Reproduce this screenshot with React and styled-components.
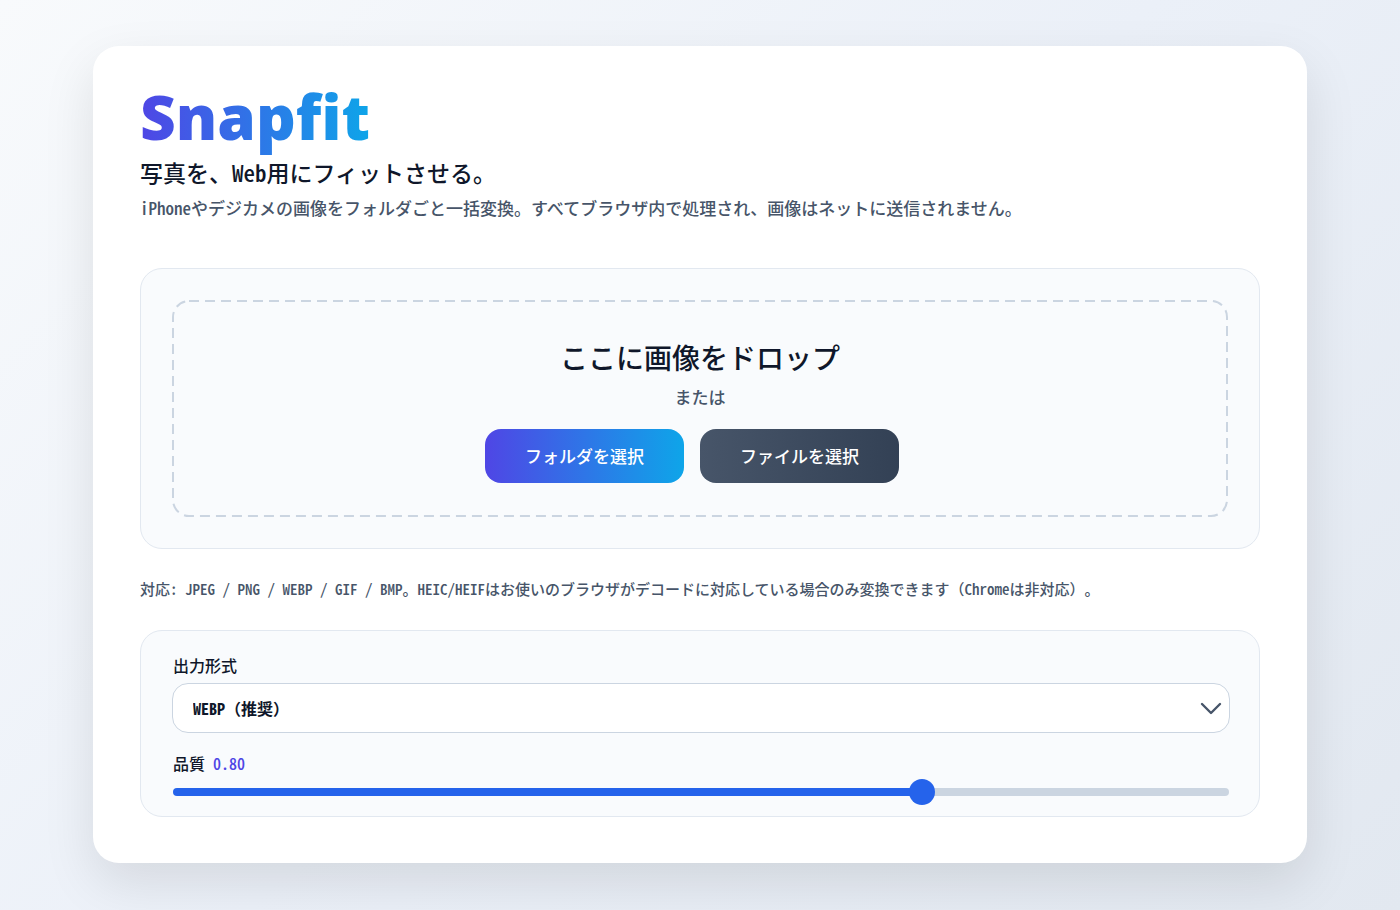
import React, { useState } from "react";
import styled, { createGlobalStyle } from "styled-components";

const GlobalStyle = createGlobalStyle`
  *,
  *::before,
  *::after {
    box-sizing: border-box;
  }

  body {
    margin: 0;
    font-family: "Noto Sans CJK JP", sans-serif;
    font-feature-settings: "hwid";
    text-spacing-trim: space-all;
    color: #0f172a;
  }
`;

const Page = styled.div`
  min-height: 100vh;
  padding: 46px 24px;
  background: linear-gradient(135deg, #f8fafc 0%, #ebf0f8 50%, #e2e8f0 100%);
`;

const Card = styled.main`
  display: flex;
  flex-direction: column;
  max-width: 1214px;
  margin: 0 auto;
  padding: 30px 47px 46px;
  border-radius: 26px;
  background: #ffffff;
  box-shadow: 0 20px 52px rgba(0, 0, 0, 0.1);
`;

const Header = styled.header`
  display: flex;
  flex-direction: column;
  align-items: flex-start;
  margin-bottom: 38px;
`;

const Logo = styled.h1`
  margin: 0;
  font-family: "Noto Sans", sans-serif;
  font-size: 62px;
  font-weight: 900;
  line-height: 80px;
  background: linear-gradient(90deg, #4f46e5, #0ea5e9);
  background-clip: text;
  color: transparent;
`;

const Tagline = styled.p`
  margin: 0;
  font-size: 23px;
  font-weight: 500;
  line-height: 32px;
`;

const Description = styled.p`
  margin: 0;
  font-size: 17px;
  font-weight: 500;
  line-height: 40px;
  padding-bottom: 2px;
  color: #475569;
`;

const Panel = styled.section`
  padding: ${(props) => (props.$compact ? "18px 29px 11px 31px" : "31px")};
  border: 1px solid #e2e8f0;
  border-radius: 22px;
  background: #f9fbfd;
`;

const DropZone = styled.div`
  position: relative;
  display: flex;
  flex-direction: column;
  align-items: center;
  padding: 35px 24px 34px;
`;

const DashedFrame = styled.svg`
  position: absolute;
  inset: 0;
  width: 100%;
  height: 100%;
  pointer-events: none;

  rect {
    width: calc(100% - 2px);
    height: calc(100% - 2px);
    fill: none;
    stroke: #cbd5e1;
    stroke-width: 2px;
    stroke-dasharray: 10 6;
  }
`;

const DropTitle = styled.h2`
  margin: 0;
  font-size: 28px;
  font-weight: 500;
  line-height: 44px;
`;

const DropText = styled.p`
  margin: 0 0 14px;
  font-size: 17px;
  font-weight: 500;
  line-height: 36px;
  color: #475569;
`;

const Actions = styled.div`
  display: flex;
  flex-wrap: wrap;
  justify-content: center;
`;

const Button = styled.button`
  margin: 0 16px 0 0;
  padding: 0 40px;
  border: none;
  border-radius: 16px;
  font: inherit;
  font-size: 17px;
  font-weight: 500;
  line-height: 54px;
  color: #ffffff;
  cursor: pointer;
  background: ${(props) =>
    props.$primary
      ? "linear-gradient(90deg, #4f46e5, #0ea5e9)"
      : "linear-gradient(90deg, #475569, #334155)"};
`;

const Note = styled.p`
  margin: 27px 0 28px;
  font-size: 15px;
  font-weight: 500;
  line-height: 26px;
  color: #475569;
`;

/* hwid also narrows the brackets, so they opt out of it */
const FullWidth = styled.span`
  font-feature-settings: normal;
`;

const Label = styled.label`
  display: block;
  padding-left: 1px;
  font-size: 16px;
  font-weight: 500;
  line-height: 32px;
`;

const SelectBox = styled.div`
  position: relative;
  margin: 2px 0 14px;
`;

const Select = styled.select`
  display: block;
  width: 100%;
  height: 50px;
  padding: 0 48px 0 20px;
  border: 1px solid #cbd5e1;
  border-radius: 16px;
  appearance: none;
  background: #ffffff;
  font-family: "Noto Sans Mono CJK JP", "Noto Sans CJK JP", sans-serif;
  font-size: 16px;
  font-weight: 700;
  color: #0f172a;
`;

const Chevron = styled.svg`
  position: absolute;
  top: 50%;
  right: 8px;
  width: 22px;
  height: 14px;
  transform: translateY(-50%);
  fill: none;
  stroke: #475569;
  stroke-width: 2.4;
  stroke-linecap: round;
  stroke-linejoin: round;
  pointer-events: none;
`;

const QualityValue = styled.span`
  margin-left: 8px;
  color: #4f46e5;
`;

const Slider = styled.input`
  display: block;
  width: calc(100% - 2px);
  height: 26px;
  margin: 0 1px;
  appearance: none;
  background: transparent;
  cursor: pointer;

  &::-webkit-slider-runnable-track {
    height: 8px;
    border-radius: 4px;
    background: linear-gradient(
      90deg,
      #2563eb var(--fill),
      #cbd5e1 var(--fill)
    );
  }

  &::-webkit-slider-thumb {
    width: 26px;
    height: 26px;
    margin-top: -9px;
    border-radius: 50%;
    appearance: none;
    background: #2563eb;
  }
`;

const MIN_QUALITY = 0.3;
const MAX_QUALITY = 1;

function DropPanel() {
  return (
    <Panel>
      <DropZone>
        <DashedFrame aria-hidden="true">
          <rect x="1" y="1" rx="16" />
        </DashedFrame>
        <DropTitle>ここに画像をドロップ</DropTitle>
        <DropText>または</DropText>
        <Actions>
          <Button type="button" $primary>
            フォルダを選択
          </Button>
          <Button type="button">ファイルを選択</Button>
        </Actions>
      </DropZone>
    </Panel>
  );
}

function Settings() {
  const [format, setFormat] = useState("webp");
  const [quality, setQuality] = useState(0.8);
  const fill = ((quality - MIN_QUALITY) / (MAX_QUALITY - MIN_QUALITY)) * 100;

  return (
    <Panel $compact>
      <Label htmlFor="format">出力形式</Label>
      <SelectBox>
        <Select
          id="format"
          value={format}
          onChange={(e) => setFormat(e.target.value)}
        >
          <option value="webp">WEBP（推奨）</option>
          <option value="jpeg">JPEG</option>
          <option value="png">PNG</option>
        </Select>
        <Chevron viewBox="0 0 22 14" aria-hidden="true">
          <path d="M2 3l9 9 9-9" />
        </Chevron>
      </SelectBox>
      <Label htmlFor="quality">
        品質
        <QualityValue>{quality.toFixed(2)}</QualityValue>
      </Label>
      <Slider
        id="quality"
        type="range"
        min={MIN_QUALITY}
        max={MAX_QUALITY}
        step="0.01"
        value={quality}
        onChange={(e) => setQuality(Number(e.target.value))}
        style={{ "--fill": `${fill}%` }}
      />
    </Panel>
  );
}

export default function App() {
  return (
    <Page>
      <GlobalStyle />
      <Card>
        <Header>
          <Logo>Snapfit</Logo>
          <Tagline>写真を、Web用にフィットさせる。</Tagline>
          <Description>
            iPhoneやデジカメの画像をフォルダごと一括変換。すべてブラウザ内で処理され、画像はネットに送信されません。
          </Description>
        </Header>
        <DropPanel />
        <Note>
          対応: JPEG / PNG / WEBP / GIF / BMP。HEIC/HEIFはお使いのブラウザがデコードに対応している場合のみ変換できます
          <FullWidth>（</FullWidth>Chromeは非対応<FullWidth>）</FullWidth>。
        </Note>
        <Settings />
      </Card>
    </Page>
  );
}
